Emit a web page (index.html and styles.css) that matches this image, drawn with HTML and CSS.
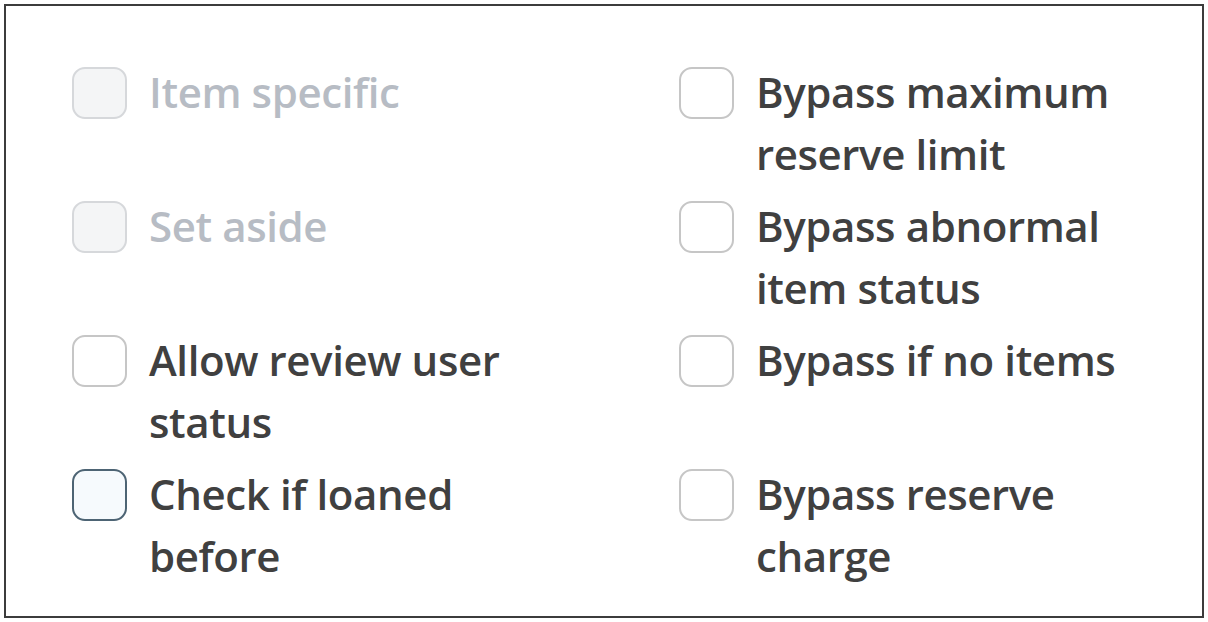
FILE: index.html
```html
<!DOCTYPE html>
<html lang="en">
<head>
<meta charset="utf-8">
<title>Reserve options</title>
<link rel="stylesheet" href="styles.css">
</head>
<body>
<div class="panel">
  <div class="grid">
    <label class="opt disabled"><span class="box"></span><span class="txt">Item specific</span></label>
    <label class="opt"><span class="box"></span><span class="txt">Bypass maximum reserve limit</span></label>
    <label class="opt disabled"><span class="box"></span><span class="txt">Set aside</span></label>
    <label class="opt"><span class="box"></span><span class="txt">Bypass abnormal item status</span></label>
    <label class="opt"><span class="box"></span><span class="txt">Allow review user status</span></label>
    <label class="opt"><span class="box"></span><span class="txt">Bypass if no items</span></label>
    <label class="opt"><span class="box focus"></span><span class="txt">Check if loaned before</span></label>
    <label class="opt"><span class="box"></span><span class="txt">Bypass reserve charge</span></label>
  </div>
</div>
</body>
</html>
```
FILE: styles.css
```css
html, body {
  margin: 0;
  padding: 0;
  background: #ffffff;
}
body {
  font-family: "Open Sans", "Noto Sans", "Liberation Sans", sans-serif;
}
.panel {
  box-sizing: border-box;
  margin: 4px 0 0 4px;
  width: 1200px;
  height: 614px;
  border: 2px solid #3c3c3c;
  padding: 55px 0 0 66px;
}
.grid {
  display: grid;
  grid-template-columns: 607px 460px;
  grid-auto-rows: 124px;
  row-gap: 10px;
}
.opt {
  display: flex;
  align-items: flex-start;
  gap: 22px;
}
.box {
  flex: none;
  box-sizing: border-box;
  width: 55px;
  height: 52px;
  margin-top: 6px;
  border: 2px solid #c6c6c6;
  border-radius: 13px;
  background: #ffffff;
}
.box.focus {
  border-color: #4d6474;
  background: #f6fafd;
}
.txt {
  max-width: 385px;
  font-size: 42px;
  font-weight: 600;
  line-height: 62px;
  color: #404040;
  letter-spacing: -0.4px;
}
.disabled .box {
  border-color: #d6d8db;
  background: #f4f5f6;
}
.disabled .txt {
  color: #b7bcc4;
}
```
